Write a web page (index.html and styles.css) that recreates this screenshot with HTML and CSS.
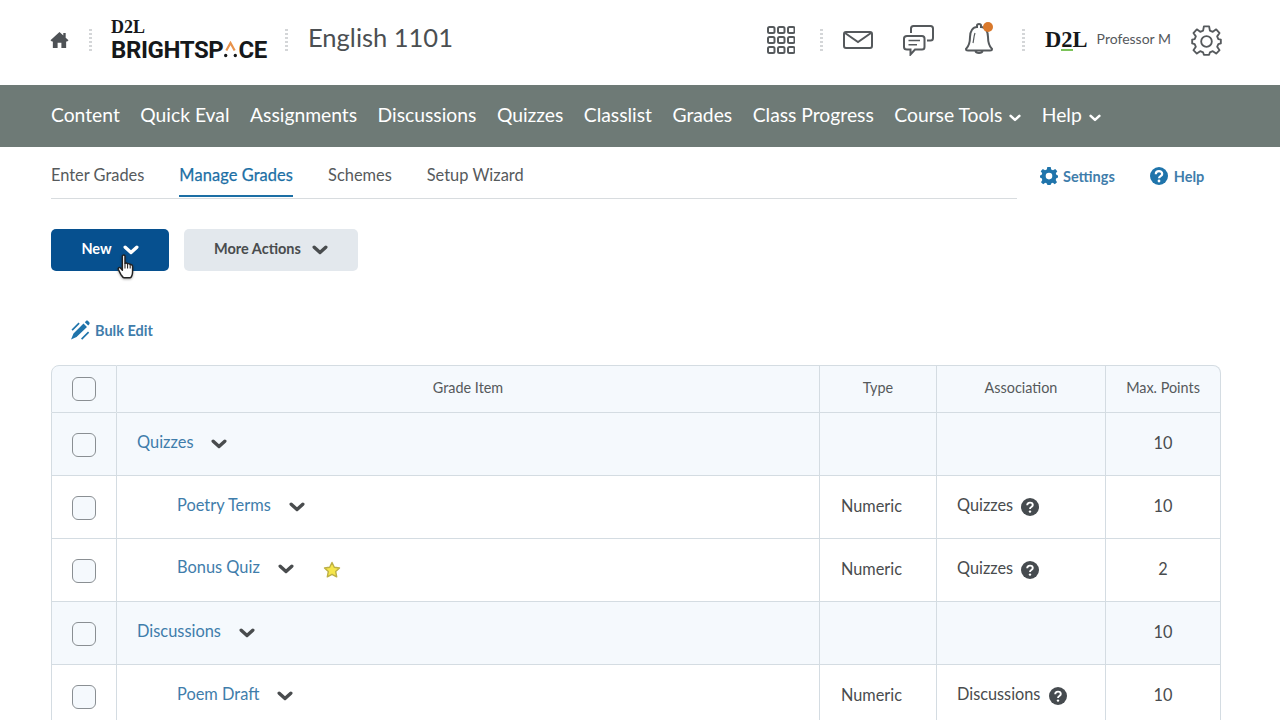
FILE: index.html
```html
<!DOCTYPE html>
<html lang="en">
<head>
    <meta charset="UTF-8">
    <meta name="viewport" content="width=device-width, initial-scale=1.0">
    <title>Manage Grades - English 1101</title>
    <link rel="stylesheet" href="styles.css">
</head>
<body>
    <svg class="defs" width="0" height="0">
        <symbol id="chev" viewBox="0 0 16 10"><path d="M2.200 2.200L8 7.500 13.800 2.200" fill="none" stroke="currentColor" stroke-width="3.400" stroke-linecap="round" stroke-linejoin="round"/></symbol>
        <symbol id="qmark" viewBox="0 0 18 18"><circle cx="9" cy="9" r="9" fill="#464b4f"/><path d="M6.200 7.200c0-1.600 1.200-2.600 2.800-2.600s2.800 1 2.800 2.400c0 2-2.800 2-2.800 3.900" fill="none" stroke="#fff" stroke-width="1.900"/><circle cx="9" cy="13.600" r="1.200" fill="#fff"/></symbol>
    </svg>

    <header class="topbar">
        <svg class="icon-home" viewBox="0 0 20 18"><path d="M10 0.500L0.500 9.200 2 10.600H3V17.500H8V12H12V17.500H17V10.600H18L19.500 9.200 16.500 6.500V1.500H14V4.200Z" fill="#4e5256"/></svg>
        <span class="dots dots-a"></span>
        <div class="logo">
            <div class="logo-d2l">D2L</div>
            <div class="logo-word">BRIGHTSP<svg class="logo-a" viewBox="0 0 14 18"><path d="M2.500 10L7 2l4.500 8" fill="none" stroke="#e8924a" stroke-width="2.400"/><circle cx="1.800" cy="15.500" r="1.800" fill="#16181a"/><circle cx="12.200" cy="15.500" r="1.800" fill="#16181a"/></svg>CE</div>
        </div>
        <span class="dots dots-b"></span>
        <div class="course">English 1101</div>

        <div class="top-right">
            <svg class="icon-grid" viewBox="0 0 28 28" fill="none" stroke="#55595c" stroke-width="2">
                <rect x="1" y="1" width="6.500" height="6" rx="1.500"/><rect x="11" y="1" width="6.500" height="6" rx="1.500"/><rect x="21" y="1" width="6.500" height="6" rx="1.500"/>
                <rect x="1" y="11" width="6.500" height="6" rx="1.500"/><rect x="11" y="11" width="6.500" height="6" rx="1.500"/><rect x="21" y="11" width="6.500" height="6" rx="1.500"/>
                <rect x="1" y="21" width="6.500" height="6" rx="1.500"/><rect x="11" y="21" width="6.500" height="6" rx="1.500"/><rect x="21" y="21" width="6.500" height="6" rx="1.500"/>
            </svg>
            <span class="dots dots-c"></span>
            <svg class="icon-mail" viewBox="0 0 30 18" fill="none" stroke="#55595c" stroke-width="2"><rect x="1" y="1" width="28" height="16" rx="2"/><path d="M2 2l13 9 13-9"/></svg>
            <svg class="icon-chat" viewBox="0 0 31 31" fill="none" stroke="#55595c" stroke-width="2"><path d="M8 8V3.500C8 2 9 1 10.500 1H27.500C29 1 30 2 30 3.500V13C30 14.500 29 15.500 27.500 15.500H24"/><path d="M4 11H19C20.500 11 21.500 12 21.500 13.500V22C21.500 23.500 20.500 24.500 19 24.500H12L7.500 29.500V24.500H4C2.300 24.500 1 23.500 1 22V13.500C1 12 2.300 11 4 11Z" fill="#fff"/><path d="M5.500 15.500H17M5.500 19.800H14" stroke-width="1.500"/></svg>
            <svg class="icon-bell" viewBox="0 0 30 33" fill="none" stroke="#55595c" stroke-width="2"><path d="M2 27C5 24 6 21 6 15C6 9 9 5 13 5V3.500C13 1.500 17 1.500 17 3.500V5C21 5 24 9 24 15C24 21 25 24 28 27C28 28 27 28.500 26 28.500H4C3 28.500 2 28 2 27Z"/><path d="M11.500 29C12 31.500 18 31.500 18.500 29"/><path d="M11 11C9.800 14 9.800 18 9 21" stroke-width="1.200"/><circle cx="24" cy="5" r="5" fill="#d9782b" stroke="none"/></svg>
            <span class="dots dots-d"></span>
            <div class="logo-small">D<span class="two">2</span>L</div>
            <span class="username">Professor M</span>
            <svg class="icon-gear" viewBox="0 0 32 32" fill="none" stroke="#55595c" stroke-width="1.900" stroke-linejoin="round"><path d="M13.300 1.500H18.700L19.500 5.800L22.500 7L26 4.500L29.500 8.300L27 11.700L28.200 14.500L30.800 15V19L28.200 19.800L27 22.500L29.500 26L26 29.500L22.500 27L19.500 28.300L18.700 30.800H13.300L12.500 28.300L9.500 27L6 29.500L2.500 26L5 22.500L3.800 19.800L1.200 19V15L3.800 14.500L5 11.700L2.500 8.300L6 4.500L9.500 7L12.500 5.800Z"/><circle cx="16" cy="17" r="5.500"/></svg>
        </div>
    </header>

    <nav class="mainnav">
        <a>Content</a>
        <a>Quick Eval</a>
        <a>Assignments</a>
        <a>Discussions</a>
        <a>Quizzes</a>
        <a>Classlist</a>
        <a>Grades</a>
        <a>Class Progress</a>
        <a>Course Tools <svg class="chev-nav"><use href="#chev"/></svg></a>
        <a>Help <svg class="chev-nav"><use href="#chev"/></svg></a>
    </nav>

    <main class="content">
        <div class="tabrow">
            <div class="tabs">
                <a class="tab">Enter Grades</a>
                <a class="tab active">Manage Grades</a>
                <a class="tab">Schemes</a>
                <a class="tab">Setup Wizard</a>
            </div>
            <div class="tab-links">
                <a class="tab-link link-settings">
                    <svg viewBox="0 0 18 18"><path fill-rule="evenodd" fill="#1f74ab" d="M7.300 0H10.700L11.200 2.500L13 3.300L15.200 1.900L17.300 4.200L15.800 6.300L16.500 8L18 8.400V10.600L16.300 11.300L15.700 13L17 15.200L14.800 17.200L12.800 15.800L11.100 16.500L10.600 18H7.400L6.900 16.500L5.200 15.800L3.200 17.200L1 15.200L2.300 13L1.700 11.300L0 10.600V8.400L1.500 8L2.200 6.300L0.700 4.200L2.800 1.900L5 3.300L6.800 2.500ZM9 5.800A3.300 3.300 0 1 0 9 12.400A3.300 3.300 0 1 0 9 5.800Z"/></svg>
                    Settings
                </a>
                <a class="tab-link">
                    <svg viewBox="0 0 18 18"><circle cx="9" cy="9" r="9" fill="#1f74ab"/><path d="M5.800 7.200C5.800 5.300 7.200 4.200 9 4.200S12.200 5.300 12.200 7C12.200 9.200 9 9.200 9 11.300" fill="none" stroke="#fff" stroke-width="2.200"/><circle cx="9" cy="14" r="1.400" fill="#fff"/></svg>
                    Help
                </a>
            </div>
        </div>

        <div class="actions">
            <button class="btn btn-primary">New <svg class="chev-btn"><use href="#chev"/></svg></button>
            <button class="btn btn-secondary">More Actions <svg class="chev-btn"><use href="#chev"/></svg></button>
        </div>

        <a class="bulk">
            <svg viewBox="0 0 20 20"><path fill="#1f74ab" d="M13.500 3.500L17 7L6.500 17L1 19.500L3.500 13.500ZM14.800 2.300L16 1C16.600 0.400 17.400 0.400 18 1L19.300 2.300C19.800 2.900 19.800 3.600 19.300 4.200L18.200 5.500ZM1.500 9.500L8.500 2.500L9.700 3.700L2.700 10.700ZM11 18.500L18 11.500L19.200 12.700L12.200 19.700Z"/></svg>
            Bulk Edit
        </a>

        <table class="grades">
            <thead>
                <tr>
                    <th class="col-check"><span class="check"></span></th>
                    <th class="col-item">Grade Item</th>
                    <th class="col-type">Type</th>
                    <th class="col-assoc">Association</th>
                    <th class="col-max">Max. Points</th>
                </tr>
            </thead>
            <tbody>
                <tr class="category">
                    <td><span class="check"></span></td>
                    <td><a class="item">Quizzes</a><svg class="chev-row"><use href="#chev"/></svg></td>
                    <td></td>
                    <td></td>
                    <td class="num">10</td>
                </tr>
                <tr>
                    <td><span class="check"></span></td>
                    <td class="child"><a class="item">Poetry Terms</a><svg class="chev-row"><use href="#chev"/></svg></td>
                    <td class="type">Numeric</td>
                    <td class="assoc">Quizzes <svg class="qmark"><use href="#qmark"/></svg></td>
                    <td class="num">10</td>
                </tr>
                <tr>
                    <td><span class="check"></span></td>
                    <td class="child"><a class="item">Bonus Quiz</a><svg class="chev-row"><use href="#chev"/></svg><svg class="star" viewBox="0 0 18 18"><path d="M9 1.500L11.300 6.300L16.500 7L12.700 10.600L13.700 15.800L9 13.300L4.300 15.800L5.300 10.600L1.500 7L6.700 6.300Z" fill="#f6e64b" stroke="#bdb045" stroke-width="1.400" stroke-linejoin="round"/></svg></td>
                    <td class="type">Numeric</td>
                    <td class="assoc">Quizzes <svg class="qmark"><use href="#qmark"/></svg></td>
                    <td class="num">2</td>
                </tr>
                <tr class="category">
                    <td><span class="check"></span></td>
                    <td><a class="item">Discussions</a><svg class="chev-row"><use href="#chev"/></svg></td>
                    <td></td>
                    <td></td>
                    <td class="num">10</td>
                </tr>
                <tr>
                    <td><span class="check"></span></td>
                    <td class="child"><a class="item">Poem Draft</a><svg class="chev-row"><use href="#chev"/></svg></td>
                    <td class="type">Numeric</td>
                    <td class="assoc">Discussions <svg class="qmark"><use href="#qmark"/></svg></td>
                    <td class="num">10</td>
                </tr>
            </tbody>
        </table>
    </main>

    <svg class="cursor" viewBox="0 0 16 24"><path d="M5 2C5 0.600 7.500 0.600 7.500 2V9C8.500 8.500 9.500 8.500 10 9.500C11 9 12 9.200 12.500 10.200C13.500 10 14.800 10.500 14.800 12V17C14.800 20 13.500 22.800 12.500 22.800H6.500C5.500 22.800 4.500 21 3.500 19.500L1.200 15C0.500 13.500 2 12.500 3.200 13.500L5 15.500Z" fill="#fff" stroke="#222" stroke-width="1.400" stroke-linejoin="round"/><path d="M7.500 9V14M10 9.500V14M12.500 10.200V14" stroke="#222" stroke-width="1"/></svg>
</body>
</html>
```

FILE: styles.css
```css
html, body {
    margin: 0;
    height: 720px;
    overflow: hidden;
}
body {
    position: relative;
    font-family: Lato, "Open Sans", sans-serif;
    color: #494c4e;
    background-color: #fff;
}
.defs {
    display: block;
    height: 0;
}
a {
    cursor: pointer;
}

/* top bar */
.topbar {
    display: flex;
    align-items: center;
    height: 85px;
    padding: 0 58px 5px 50px;
    box-sizing: border-box;
}
.icon-home {
    width: 19px;
    height: 18px;
}
.dots {
    width: 3px;
    height: 24px;
    background-image: radial-gradient(circle, #d4d6d8 1.200px, transparent 1.500px);
    background-size: 3px 4px;
}
.dots-a { margin: 0 19px 0 20px; }
.dots-b { margin: 0 20px 0 16px; }
.dots-c { margin: 0 20px 0 25px; }
.dots-d { margin: 0 20px 0 28px; }
.logo {
    width: 158px;
    margin-top: 3px;
}
.logo-d2l {
    font-family: "Liberation Serif", serif;
    font-weight: bold;
    font-size: 18px;
    line-height: 17px;
    color: #16181a;
}
.logo-word {
    font-family: Roboto, "Liberation Sans", sans-serif;
    font-weight: bold;
    font-size: 24px;
    line-height: 28px;
    letter-spacing: -0.4px;
    color: #16181a;
    white-space: nowrap;
}
.logo-a {
    width: 13px;
    height: 17px;
    margin: 0 1px;
}
.course {
    font-size: 25.500px;
    color: #4b4f52;
    margin-top: -7px;
}
.top-right {
    display: flex;
    align-items: center;
    margin-left: auto;
}
.icon-grid { width: 28px; height: 28px; }
.icon-mail { width: 30px; height: 18px; }
.icon-chat { width: 31px; height: 31px; margin-left: 30px; }
.icon-bell { width: 30px; height: 33px; margin: -4px 0 0 30px; }
.logo-small {
    font-family: "Liberation Serif", serif;
    font-weight: bold;
    font-size: 22.500px;
    color: #16181a;
}
.logo-small .two {
    border-bottom: 2px solid #7cc35a;
    line-height: 18px;
    display: inline-block;
}
.username {
    font-size: 14px;
    color: #55595c;
    margin: -3px 0 0 9px;
}
.icon-gear { width: 31px; height: 31px; margin-left: 20px; }

/* course nav */
.mainnav {
    display: flex;
    align-items: center;
    gap: 20.500px;
    height: 62px;
    padding: 0 0 4px 51px;
    box-sizing: border-box;
    background-color: #6e7a76;
    font-size: 19.300px;
    color: #fff;
}
.mainnav a {
    white-space: nowrap;
}
.chev-nav {
    width: 12px;
    height: 8px;
    margin-left: 2px;
}

/* tabs */
.content {
    padding: 0 59px 0 51px;
}
.tabrow {
    display: flex;
    height: 52px;
}
.tabs {
    display: flex;
    gap: 35px;
    width: 966px;
    border-bottom: 1px solid #d8dcdf;
    box-sizing: border-box;
    font-size: 16.400px;
}
.tab {
    padding-top: 18px;
    color: #565a5c;
}
.tab.active {
    color: #1c6fa5;
    -webkit-text-stroke: 0.25px #1c6fa5;
    letter-spacing: 0.1px;
    border-bottom: 2px solid #1c6fa5;
    height: 50px;
    box-sizing: border-box;
    margin-bottom: -1px;
}
.tab-links {
    display: flex;
    gap: 35px;
    padding: 20px 0 0 23px;
    font-size: 14.500px;
    font-weight: bold;
    color: #3f7dab;
}
.tab-link {
    display: flex;
    gap: 6px;
    height: 18px;
    align-items: center;
}
.link-settings {
    gap: 5px;
}
.tab-link svg {
    width: 18px;
    height: 18px;
}

/* buttons */
.actions {
    display: flex;
    gap: 15px;
    margin-top: 30px;
}
.btn {
    display: flex;
    align-items: center;
    justify-content: center;
    height: 42px;
    padding: 0 0 3px;
    border: 0;
    border-radius: 5px;
    font-family: inherit;
    font-size: 14.500px;
    font-weight: bold;
}
.btn-primary {
    width: 118px;
    background-color: #06508f;
    color: #fff;
}
.btn-secondary {
    width: 174px;
    background-color: #e3e8ed;
    color: #494c4e;
}
.chev-btn {
    width: 16px;
    height: 10px;
    margin: 2px 0 0 11px;
}
.bulk {
    display: flex;
    align-items: center;
    gap: 5px;
    margin: 49px 0 25px 19px;
    height: 20px;
    font-size: 14.500px;
    font-weight: bold;
    color: #3f7dab;
}
.bulk svg {
    width: 20px;
    height: 20px;
}

/* table */
.grades {
    width: 1170px;
    table-layout: fixed;
    border-collapse: separate;
    border-spacing: 0;
    font-size: 16.300px;
}
.grades th, .grades td {
    height: 63px;
    padding: 0 0 4px;
    box-sizing: border-box;
    border-bottom: 1px solid #d4dce2;
    border-right: 1px solid #d4dce2;
}
.grades tr > :first-child {
    border-left: 1px solid #d4dce2;
    text-align: center;
}
.grades th {
    height: 48px;
    font-size: 14.400px;
    font-weight: normal;
    background-color: #f5f9fd;
    border-top: 1px solid #d4dce2;
    color: #565a5c;
}
.grades th:first-child { border-top-left-radius: 8px; }
.grades th:last-child { border-top-right-radius: 8px; }
.col-check { width: 66px; }
.col-type { width: 117px; }
.col-assoc { width: 169px; }
.col-max { width: 115px; }
.category td {
    background-color: #f5f9fd;
}
.check {
    display: inline-block;
    width: 24px;
    height: 24px;
    box-sizing: border-box;
    margin-top: 5px;
    vertical-align: middle;
    border: 1px solid #8a8f93;
    border-radius: 6px;
    background-color: #f5f9fd;
}
.grades th .check {
    margin-top: 3px;
}
.grades td:nth-child(2) {
    padding-left: 20px;
    white-space: nowrap;
}
.grades td.child {
    padding-left: 60px;
}
.item {
    color: #3f7dab;
    font-size: 16.400px;
    position: relative;
    top: -1px;
}
.chev-row {
    width: 16px;
    height: 10px;
    margin-left: 18px;
}
.star {
    width: 18px;
    height: 18px;
    margin-left: 29px;
    vertical-align: -5px;
}
.type {
    padding-left: 21px !important;
}
.assoc {
    padding-left: 20px !important;
    white-space: nowrap;
}
.qmark {
    width: 18px;
    height: 18px;
    margin-left: 4px;
    vertical-align: -5px;
}
.num {
    text-align: center;
}

/* mouse pointer over the New button */
.cursor {
    position: absolute;
    left: 117px;
    top: 254px;
    width: 17px;
    height: 25px;
    filter: drop-shadow(0 1px 1px rgba(0, 0, 0, 0.3));
}
```
